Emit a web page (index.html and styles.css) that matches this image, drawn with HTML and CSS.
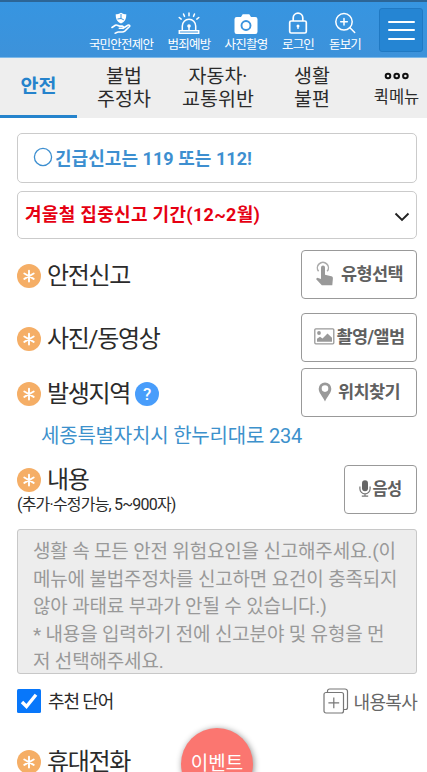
FILE: index.html
```html
<!DOCTYPE html>
<html lang="ko">
<head>
<meta charset="utf-8">
<meta name="viewport" content="width=device-width, initial-scale=1">
<title>안전신고</title>
<link rel="stylesheet" href="styles.css">
</head>
<body>
<svg class="defs" width="0" height="0" aria-hidden="true">
  <symbol id="required" viewBox="0 0 24 24"><circle cx="12" cy="12" r="12" fill="#f5ae66"/><path d="M12 6.800v10.800M7.300 9.500l9.400 5.400M16.700 9.500l-9.400 5.400" stroke="#fff" stroke-width="1.900" stroke-linecap="round"/></symbol>
</svg>
<header class="top">
  <nav class="tools">
    <a class="tool t1"><svg width="20" height="23" viewBox="0 0 20 23"><path d="M10 .7c2 1.3 3.700 1.600 5.300 1.600 0 4.700-1.300 7.700-5.300 9.200-4-1.500-5.300-4.500-5.300-9.200C6.300 2.300 8 2 10 .7z" fill="#fff"/><path d="M10 2v4.500L6.500 7M10 6.500l2.800 1.300" stroke="#3993de" fill="none"/><path d="M1 15.500l3.300-2.200c1.800-1 2.700.8 4.300.8h2.600c1.600 0 1.500 2.200 0 2.200H8.300M12 16.300l4.900-3.100c1.300-.7 2.400.5 1.400 1.600l-4.500 4.300c-.8.700-1.500.9-2.600.9H7.300c-1.700 0-1.900 1.300-3.200 1.300" stroke="#fff" stroke-width="1.600" fill="none" stroke-linecap="round"/></svg><span>국민안전제안</span></a>
    <a class="tool t2"><svg width="22" height="23" viewBox="0 0 22 23"><g stroke="#fff" fill="none" stroke-width="1.500" stroke-linecap="round"><path d="M4.300 18.500V14a6.700 6.700 0 0 1 13.400 0v4.500M1.300 21.300v-2.600h19.400v2.600zM11 14.500v3.500M11 1v2.700M5.500 2l1 2.400M16.500 2l-1 2.400M1.200 5.500l2 1.600M20.800 5.500l-2 1.600"/></g><circle cx="11" cy="14" r="1.800" fill="#fff"/></svg><span>범죄예방</span></a>
    <a class="tool t3"><svg width="24" height="23" viewBox="0 0 24 23"><path d="M7 5l1.700-2.700h6.600L17 5h4.300A2.200 2.200 0 0 1 23.500 7.200v12.600a2.200 2.200 0 0 1-2.200 2.200H2.700A2.200 2.200 0 0 1 .5 19.800V7.200A2.200 2.200 0 0 1 2.700 5z" fill="#fff"/><circle cx="12" cy="13.500" r="4.500" fill="none" stroke="#3993de" stroke-width="1.900"/></svg><span>사진촬영</span></a>
    <a class="tool t4"><svg width="20" height="23" viewBox="0 0 20 23"><g stroke="#fff" fill="none" stroke-width="1.700"><rect x="1.700" y="9" width="16.600" height="12" rx="1.500"/><path d="M5.200 9V6a4.800 4.800 0 0 1 9.600 0v3"/></g><circle cx="10" cy="14" r="1.500" fill="#fff"/><path d="M10 14v3" stroke="#fff" stroke-width="1.300"/></svg><span>로그인</span></a>
    <a class="tool t5"><svg width="22" height="23" viewBox="0 0 22 23"><g stroke="#fff" fill="none" stroke-width="1.500" stroke-linecap="round"><circle cx="10" cy="9.800" r="8.200"/><path d="M16 15.800l4.700 4.700M10 6.500v6.600M6.700 9.800h6.600"/></g></svg><span>돋보기</span></a>
  </nav>
  <button class="menu" aria-label="메뉴"><i></i><i></i><i></i></button>
</header>
<nav class="tabs">
  <a class="tab active">안전</a>
  <a class="tab">불법<br>주정차</a>
  <a class="tab">자동차·<br>교통위반</a>
  <a class="tab">생활<br>불편</a>
  <a class="tab quick"><svg width="25" height="8" viewBox="0 0 25 8"><g fill="none" stroke="#111" stroke-width="2"><circle cx="4" cy="4" r="2.300"/><circle cx="12.700" cy="4" r="2.300"/><circle cx="21.400" cy="4" r="2.300"/></g></svg><span>퀵메뉴</span></a>
</nav>
<main class="form">
  <div class="notice"><svg width="20" height="20" viewBox="0 0 20 20"><circle cx="10" cy="10" r="8.600" fill="none" stroke="#3d8fd0" stroke-width="1.300"/></svg><span>긴급신고는 119 또는 112!</span></div>
  <div class="select"><span>겨울철 집중신고 기간(12~2월)</span><svg width="16" height="10" viewBox="0 0 16 10"><path d="M1.500 1.500L8 8l6.500-6.500" fill="none" stroke="#222" stroke-width="1.900"/></svg></div>

  <div class="row r1"><svg class="req"><use href="#required"/></svg><h2>안전신고</h2>
    <button class="btn"><svg class="i-touch" width="19" height="26" viewBox="0 0 19 26"><path d="M3.600 10.300a5.500 5.500 0 1 1 8.600 0" fill="none" stroke="#aaa" stroke-width="1.500"/><path d="M6 6.500a2 2 0 0 1 4 0v7.200l6.300 1.600c1.200.3 1.700 1 1.600 2.200l-.6 6.700H6.800L1 17.900l1.300-1.200L6 18z" fill="#999"/></svg><span>유형선택</span></button></div>
  <div class="row r2"><svg class="req"><use href="#required"/></svg><h2>사진/동영상</h2>
    <button class="btn"><svg class="i-photo" width="21" height="17" viewBox="0 0 21 17"><rect x=".8" y=".8" width="19" height="15" rx="1" fill="none" stroke="#999" stroke-width="1.300"/><circle cx="5" cy="5" r="1.900" fill="#999"/><path d="M3 13.800v-3l3-2 2.500 1.800 5-5.100 4.500 4.300v4z" fill="#999"/></svg><span>촬영/앨범</span></button></div>
  <div class="row r3"><svg class="req"><use href="#required"/></svg><h2>발생지역</h2><span class="help">?</span>
    <button class="btn"><svg class="i-pin" width="14" height="20" viewBox="0 0 14 20"><path fill-rule="evenodd" d="M7 .5a6.300 6.300 0 0 1 6.300 6.300C13.300 11 9.500 14 7 19.500 4.500 14 .7 11 .7 6.800A6.300 6.300 0 0 1 7 .5zM7 3.300a3.300 3.300 0 1 0 0 6.600 3.300 3.300 0 0 0 0-6.600z" fill="#999"/></svg><span>위치찾기</span></button></div>
  <p class="address">세종특별자치시 한누리대로 234</p>
  <div class="row r4">
    <div class="label"><div class="line"><svg class="req"><use href="#required"/></svg><h2>내용</h2></div><small>(추가·수정가능, 5~900자)</small></div>
    <button class="btn voice"><svg class="i-mic" width="12" height="17" viewBox="0 0 12 17"><rect x="3" y=".3" width="6" height="11" rx="3" fill="#666"/><path d="M.9 6.500v2.200a5.100 5.100 0 0 0 10.200 0V6.500M6 13.800v2M2.800 16.200h6.400" fill="none" stroke="#777" stroke-width="1.200"/></svg><span>음성</span></button></div>
  <div class="textarea">생활 속 모든 안전 위험요인을 신고해주세요.(이<br>메뉴에 불법주정차를 신고하면 요건이 충족되지<br>않아 과태료 부과가 안될 수 있습니다.)<br>* 내용을 입력하기 전에 신고분야 및 유형을 먼<br>저 선택해주세요.</div>
  <div class="options">
    <svg width="24" height="24" viewBox="0 0 24 24"><rect width="24" height="24" rx="1.500" fill="#0877fa"/><path d="M5 13l4.500 4.500L19 5.800" fill="none" stroke="#fff" stroke-width="3.400"/></svg>
    <span class="words">추천 단어</span>
    <svg class="i-copy" width="26" height="26" viewBox="0 0 26 26"><g fill="none" stroke="#777" stroke-width="1.200"><rect x="1" y="4.500" width="19.500" height="20.500" rx="2"/><path d="M4.500 4.500V3a2 2 0 0 1 2-2H22a2.500 2.500 0 0 1 2.500 2.500V19.500a2 2 0 0 1-2 2h-2M10.800 9.500v10.800M5.400 14.900h10.800"/></g></svg>
    <span class="copy">내용복사</span>
  </div>
  <div class="row r5"><svg class="req"><use href="#required"/></svg><h2>휴대전화</h2></div>
</main>
<a class="event">이벤트</a>
</body>
</html>
```
FILE: styles.css
```css
* { box-sizing: border-box; }
html, body { height: 100%; margin: 0; overflow: hidden; }
body { background: #fff; color: #2b2b2b; font-family: Roboto, "Noto Sans CJK KR", sans-serif; position: relative; }
button { font: inherit; margin: 0; padding: 0; }
h2, p { margin: 0; font-weight: 400; }
span, h2, small, p { white-space: nowrap; }
svg { display: block; flex: none; }
.defs { position: absolute; }

.top { height: 58px; display: flex; justify-content: space-between; background: linear-gradient(#3695e1, #3d92da); border-top: 2px solid #2c6596; border-bottom: 1px solid #7db9e9; padding: 6px 4px 0 88px; }
.tools { display: flex; padding-top: 4px; }
.tool { display: flex; flex-direction: column; align-items: center; color: #fff; font-size: 12.5px; letter-spacing: -.8px; line-height: 18px; }
.tool span { margin-top: 1px; }
.t1 { width: 66px; }
.t2 { width: 44px; margin-left: 13px; }
.t3 { width: 44px; margin-left: 13px; }
.t4 { width: 34px; margin-left: 13px; }
.t5 { width: 34px; margin-left: 13px; }
.menu { width: 44px; height: 44px; display: flex; flex-direction: column; align-items: center; justify-content: center; gap: 6.500px; background: #2585d3; border: 1px solid #2079c3; border-radius: 3px; }
.menu i { width: 27px; height: 2px; background: #fff; border-radius: 1px; }

.tabs { height: 60px; display: grid; grid-template-columns: 77px 94px 94px 94px 68px; background: #eee; }
.tab { display: flex; flex-direction: column; justify-content: center; text-align: center; font-size: 19.500px; line-height: 23px; padding: 0 0 1px; white-space: nowrap; }
.active { color: #2583cc; font-weight: 700; border-bottom: 3px solid #2583cc; padding-top: 0; }
.quick { align-items: center; font-size: 16.500px; padding: 4px 0 0 7px; }
.quick svg { margin-top: 1px; }
.quick span { margin-top: 7px; line-height: 22px; }

.form { padding: 15px 10px 0 17px; }
.notice, .select { height: 50px; border: 1px solid #cbcbcb; border-radius: 5px; display: flex; align-items: center; font-weight: 700; font-size: 18px; }
.notice { color: #3d8fd0; padding: 0 0 3px 15px; gap: 2px; letter-spacing: .05px; }
.select { height: 48px; margin-top: 8px; color: #e60012; padding: 0 6px 0 7px; justify-content: space-between; font-size: 18px; letter-spacing: .3px; }
.select span { margin-bottom: 4px; }
.select svg { margin-top: 3px; }

.row { display: flex; align-items: center; }
.req { width: 24px; height: 24px; }
.r1 .req, .r2 .req, .r3 .req, .r1 h2, .r2 h2, .r3 h2, .help { margin-top: 2px; }
h2 { font-size: 24px; line-height: 30px; letter-spacing: -1.300px; margin-left: 6px; }
.btn { margin-left: auto; width: 116px; height: 49px; border: 1px solid #999; border-radius: 4px; background: #fff; display: flex; align-items: center; justify-content: center; color: #606060; font-size: 17.500px; font-weight: 700; letter-spacing: -.6px; padding-bottom: 2px; }
.btn span { margin-bottom: 2px; }
.r1 { margin-top: 11px; height: 49px; }
.r2 { margin-top: 14px; height: 49px; }
.r3 { margin-top: 6px; height: 49px; }
.i-touch { margin-right: 7px; }
.i-photo { margin-right: 2px; }
.i-pin { margin-right: 6px; }
.help { width: 24px; height: 24px; margin-left: 5px; border-radius: 50%; background: #489dfb; color: #fff; text-align: center; font-size: 17px; line-height: 24px; font-weight: 500; }
.address { margin: 3px 0 0 24px; color: #3d91cc; font-size: 20px; line-height: 32px; letter-spacing: -.2px; }
.r4 { margin-top: 13px; height: 50px; align-items: flex-start; }
.line { display: flex; align-items: center; height: 30px; }
.label small { display: block; margin-top: 1px; font-size: 16px; line-height: 18px; letter-spacing: -.8px; }
.voice { width: 73px; font-size: 16.500px; }
.i-mic { margin-right: 1px; }
.textarea { margin-top: 14px; height: 145px; border: 1px solid #c8c8c8; border-radius: 3px; background: #ededed; color: #999; padding: 8px 0 0 15px; font-size: 19px; line-height: 27.500px; letter-spacing: -.17px; white-space: nowrap; overflow: hidden; }
.options { display: flex; align-items: center; height: 26px; margin-top: 14px; font-size: 18px; }
.words { margin: 0 0 2px 7px; letter-spacing: -1.100px; }
.i-copy { margin-left: auto; }
.copy { color: #666; letter-spacing: -.7px; margin-left: 5px; }
.r5 { margin-top: 33px; height: 30px; }
.event { position: absolute; left: 181px; top: 728px; width: 72px; height: 72px; border-radius: 50%; background: #fb7670; color: #fff; text-align: center; font-size: 19px; line-height: 72px; box-shadow: 1px 1px 6px rgba(0, 0, 0, .45); }
.active, .event { white-space: nowrap; }
```
